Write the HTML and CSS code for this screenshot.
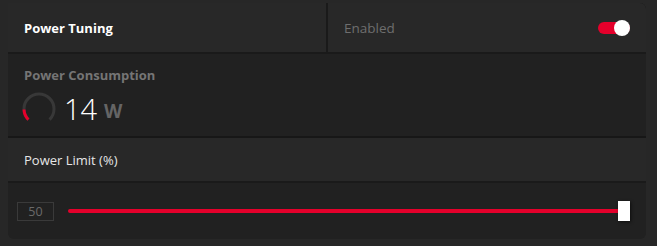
FILE: index.html
```html
<!DOCTYPE html>
<html lang="en">
<head>
    <meta charset="UTF-8">
    <title>Power Tuning</title>
    <link rel="stylesheet" href="styles.css">
</head>
<body>
<div class="card">
    <div class="head-row">
        <div class="cell">
            <span class="title">Power Tuning</span>
        </div>
        <div class="cell cell-right">
            <span class="state">Enabled</span>
            <div class="toggle"><span class="knob"></span></div>
        </div>
    </div>
    <div class="consumption">
        <div class="label">Power Consumption</div>
        <div class="reading">
            <svg class="gauge" width="36" height="36" viewBox="0 0 36 36">
                <path d="M7.4 28.6 A15 15 0 1 1 28.6 28.6" fill="none" stroke="#383838" stroke-width="3"/>
                <path d="M7.4 28.6 A15 15 0 0 1 3 18.5" fill="none" stroke="#e4002b" stroke-width="3"/>
            </svg>
            <span class="value">14</span>
            <span class="unit">W</span>
        </div>
    </div>
    <div class="limit-row">
        <span class="limit-title">Power Limit (%)</span>
    </div>
    <div class="slider-row">
        <div class="num-box">50</div>
        <div class="track">
            <div class="fill"></div>
            <div class="thumb"></div>
        </div>
    </div>
</div>
</body>
</html>
```

FILE: styles.css
```css
* {
    margin: 0;
    padding: 0;
    box-sizing: border-box;
}

body {
    background: #272727;
    font-family: "Open Sans", "Noto Sans", sans-serif;
    width: 657px;
    height: 246px;
    overflow: hidden;
}

.card {
    width: 638px;
    height: 236px;
    margin: 3px 0 0 8px;
    background: #212121;
    border-radius: 0 6px 6px 6px;
    overflow: hidden;
}

.head-row {
    display: grid;
    grid-template-columns: 1fr 1fr;
    gap: 2px;
    height: 51px;
    border-bottom: 2px solid #1a1a1a;
    background: #1a1a1a;
}

.cell {
    background: #282828;
    display: flex;
    align-items: center;
    padding-left: 16px;
}

.cell-right {
    justify-content: space-between;
    padding-right: 16px;
}

.title {
    color: #fff;
    font-weight: 700;
    font-size: 13px;
}

.state {
    color: #6e6e6e;
    font-size: 13.5px;
}

.toggle {
    position: relative;
    width: 32px;
    height: 12px;
    background: #e4002b;
    border-radius: 6px;
}

.knob {
    position: absolute;
    right: 0;
    top: -2px;
    width: 16px;
    height: 16px;
    border-radius: 50%;
    background: #fff;
}

.consumption {
    height: 84px;
    padding: 12px 0 0 16px;
    border-bottom: 2px solid #171717;
}

.label {
    color: #757575;
    font-weight: 700;
    font-size: 13px;
}

.reading {
    display: flex;
    align-items: center;
    margin-top: 5px;
}

.gauge {
    margin-left: -3px;
}

.value {
    color: #fff;
    font-size: 29px;
    font-weight: 300;
    margin-left: 7px;
}

.unit {
    color: #656565;
    font-size: 19px;
    font-weight: 700;
    margin-left: 7px;
    margin-top: 5px;
}

.limit-row {
    height: 45px;
    background: #282828;
    display: flex;
    align-items: center;
    padding-left: 16px;
    border-bottom: 2px solid #1a1a1a;
}

.limit-title {
    color: #e6e6e6;
    font-size: 13px;
}

.slider-row {
    display: flex;
    align-items: center;
    padding: 18px 16px 0 9px;
}

.num-box {
    width: 37px;
    height: 19px;
    border: 1px solid #3a3a3a;
    color: #6a6a6a;
    font-size: 12.5px;
    text-align: center;
    line-height: 17px;
}

.track {
    position: relative;
    flex: 1;
    height: 20px;
    margin-left: 14px;
}

.fill {
    position: absolute;
    left: 0;
    right: 6px;
    top: 8px;
    height: 4px;
    border-radius: 2px;
    background: #e4002b;
}

.thumb {
    position: absolute;
    right: 0;
    top: 0;
    width: 12px;
    height: 20px;
    background: #fff;
    box-shadow: 1px 1px 3px rgba(0, 0, 0, 0.6);
}
```
